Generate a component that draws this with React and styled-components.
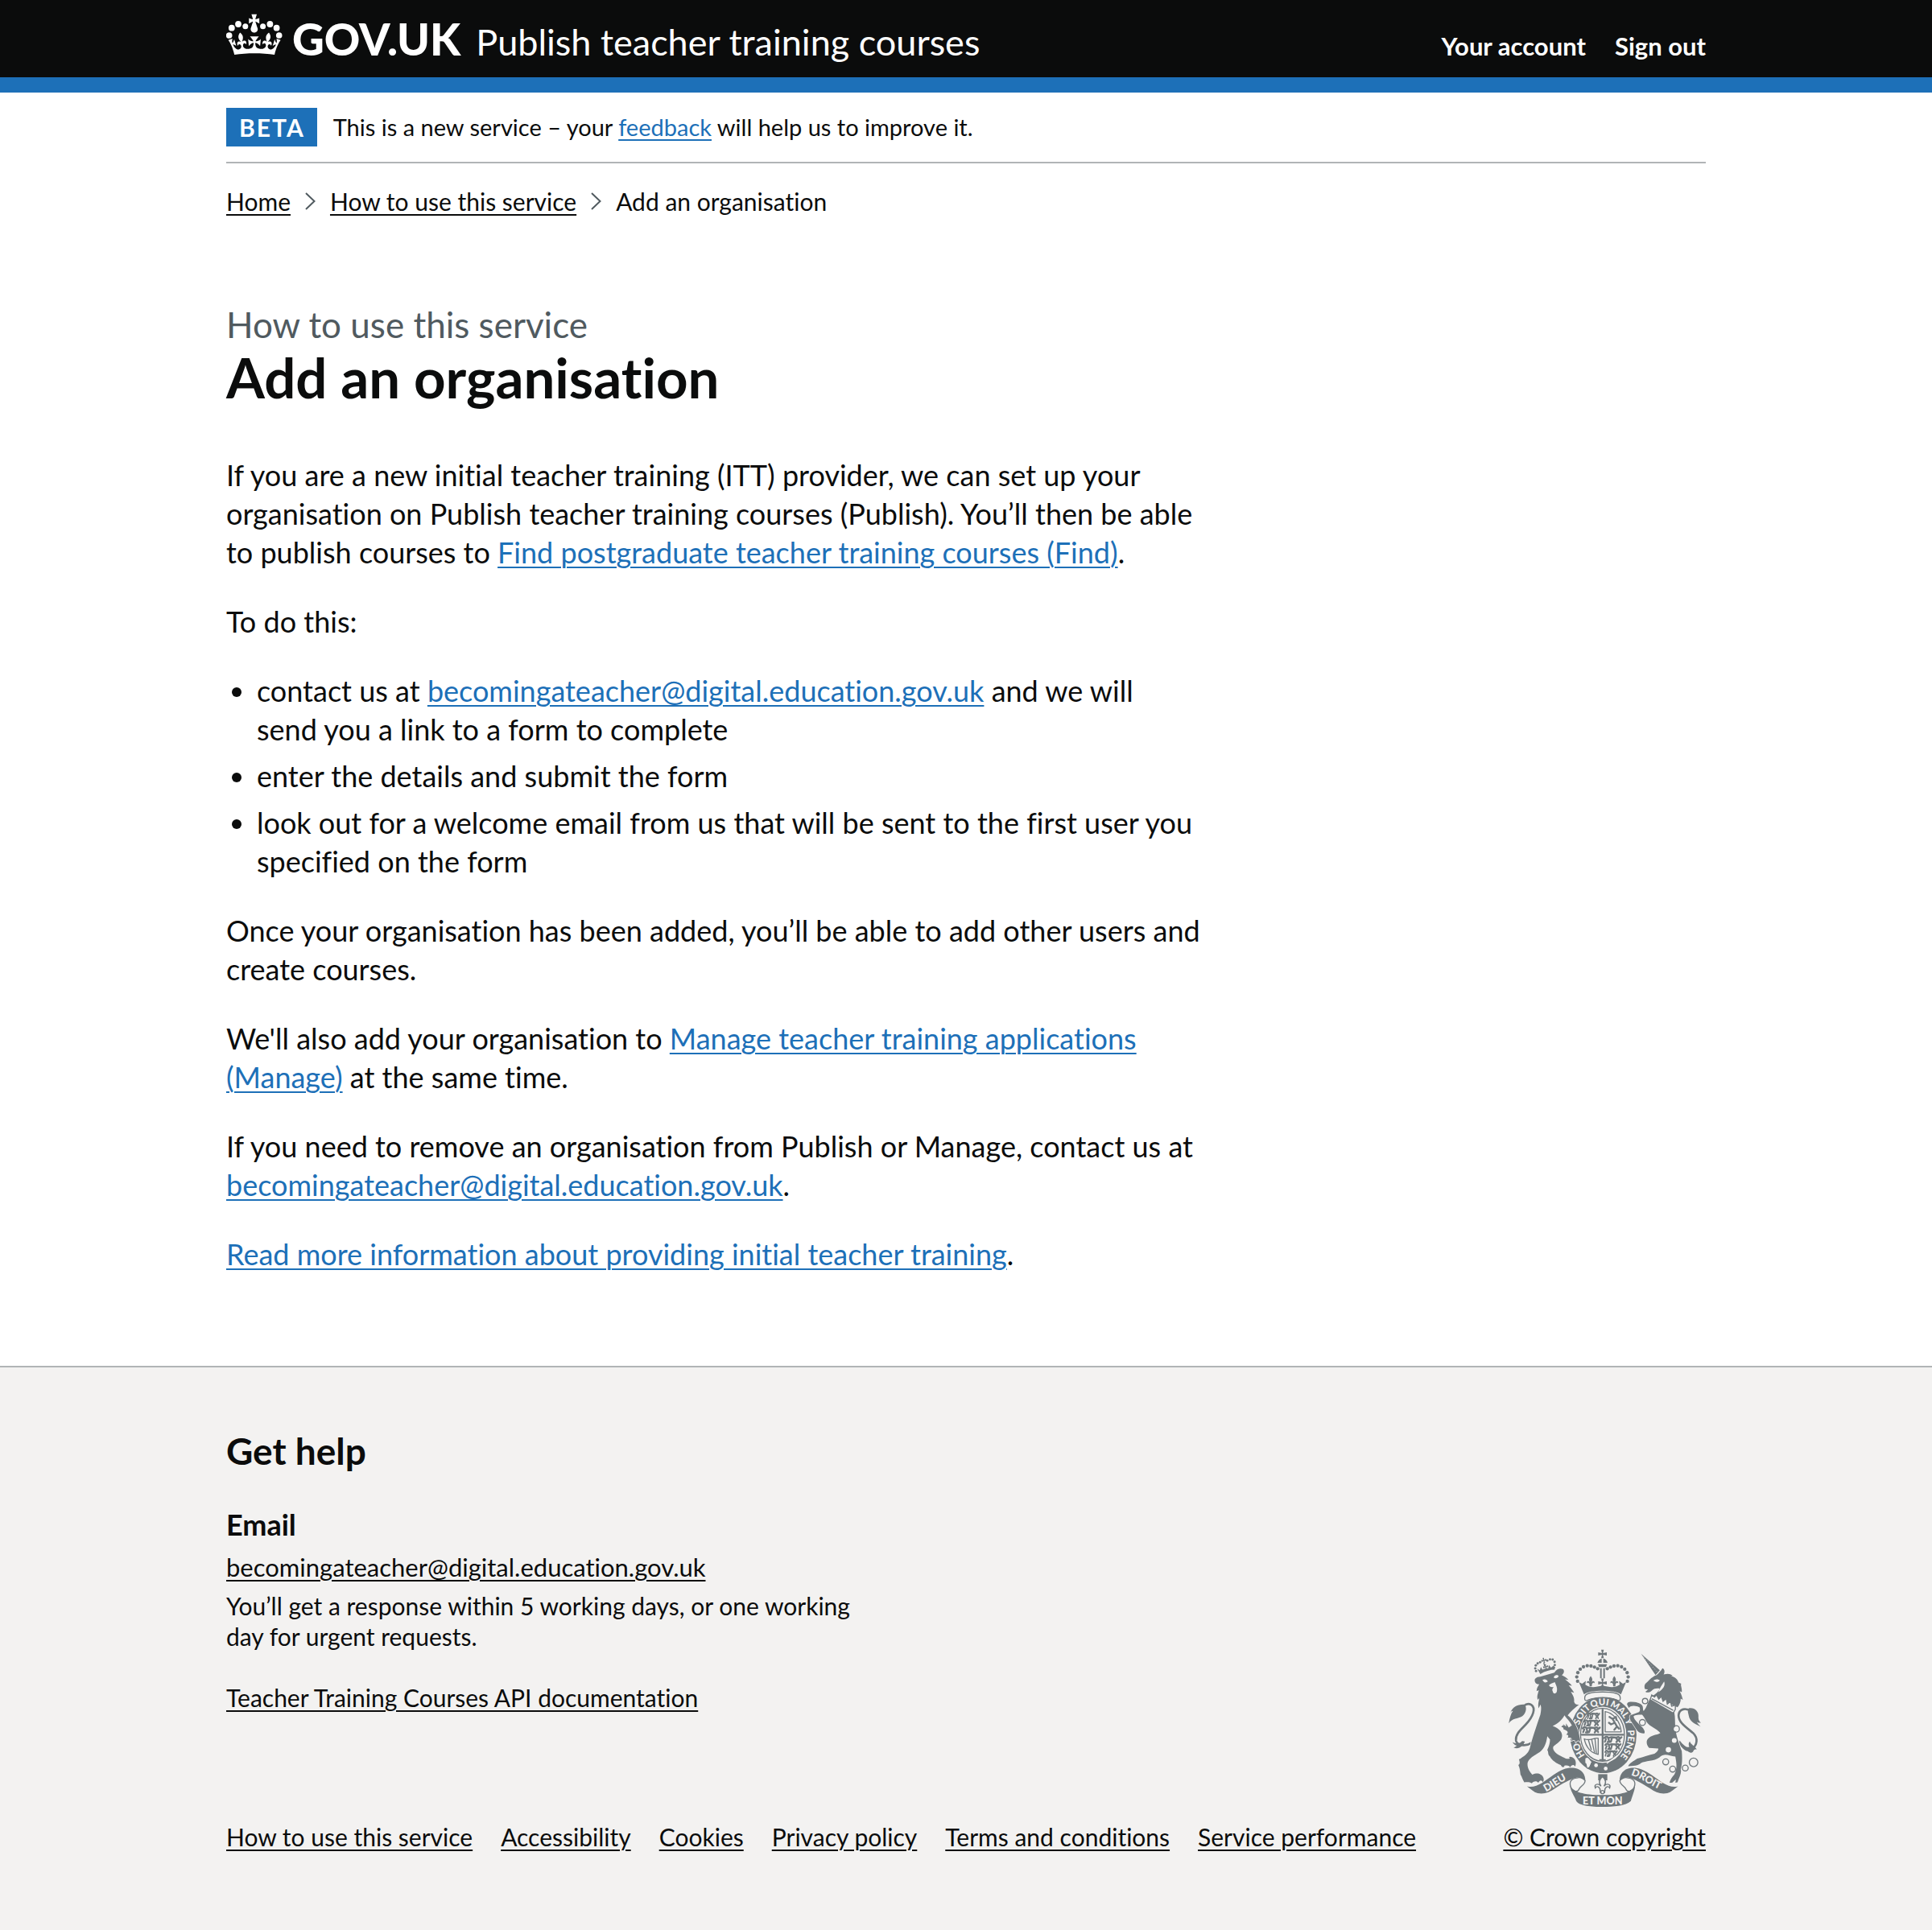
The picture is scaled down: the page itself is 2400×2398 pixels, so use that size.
import React from "react";
import styled, { createGlobalStyle } from "styled-components";

const ink = "#0b0c0c";
const blue = "#1d70b8";
const grey = "#f3f2f1";
const rule = "#b1b4b6";
const secondary = "#505a5f";
const crestGrey = "#6f777b";

const GlobalStyle = createGlobalStyle`
  * { box-sizing: border-box; }
  body {
    margin: 0;
    background: #ffffff;
    color: ${ink};
    font-family: Lato, "Liberation Sans", sans-serif;
    font-variant-ligatures: none;
  }
  h1, h2, h3, p, ul, ol { margin: 0; padding: 0; font-weight: 400; }
`;

const Page = styled.div`
  display: flex;
  flex-direction: column;
  min-height: 100vh;
`;

const Container = styled.div`
  width: calc(100% - 60px);
  max-width: 1838px;
  margin: 0 auto;
`;

const Link = styled.a`
  color: ${(p) => (p.$plain ? ink : blue)};
  text-decoration: underline;
  text-decoration-thickness: 2px;
  text-underline-offset: 4px;
`;

/* Header */

const Header = styled.header`
  background: ${ink};
  color: #ffffff;
  border-bottom: 19px solid ${blue};
`;

const HeaderRow = styled(Container)`
  display: flex;
  align-items: baseline;
  height: 96px;
  padding-top: 17px;
`;

const LogoLink = styled.a`
  display: flex;
  align-items: baseline;
  gap: 12px;
  color: #ffffff;
  text-decoration: none;
  font-size: 55px;
  font-weight: 900;
  line-height: 56px;
`;

const CrownSvg = styled.svg`
  width: 70px;
  height: 52px;
  margin-bottom: -5px;
  fill: #ffffff;
`;

const ServiceLink = styled.a`
  margin-left: 19px;
  color: #ffffff;
  text-decoration: none;
  font-size: 45px;
  line-height: 48px;
`;

const HeaderNav = styled.nav`
  display: flex;
  gap: 36px;
  margin-left: auto;
`;

const NavLink = styled.a`
  color: #ffffff;
  text-decoration: none;
  font-size: 31px;
  font-weight: 700;
  line-height: 38px;
`;

/* Phase banner and breadcrumbs */

const PhaseBanner = styled.div`
  display: flex;
  align-items: center;
  gap: 20px;
  padding: 19px 0;
  border-bottom: 2px solid ${rule};
  font-size: 29px;
  line-height: 38px;
`;

const Tag = styled.strong`
  padding: 0 15px 0 16px;
  background: ${blue};
  color: #ffffff;
  font-size: 30px;
  font-weight: 700;
  line-height: 48px;
  letter-spacing: 2px;
`;

const Breadcrumbs = styled.ol`
  display: flex;
  align-items: center;
  gap: 18px;
  padding-top: 28px;
  list-style: none;
  font-size: 30px;
  line-height: 38px;
`;

const Crumb = styled.li`
  display: flex;
  align-items: center;
  gap: 18px;
`;

const ChevronSvg = styled.svg`
  width: 13px;
  height: 22px;
  fill: none;
  stroke: ${secondary};
  stroke-width: 2;
`;

/* Content */

const Main = styled.main`
  display: flex;
  flex-direction: column;
  gap: 38px;
  padding: 106px 0 115px;
  font-size: 36px;
  line-height: 48px;
`;

const Heading = styled.h1`
  margin-bottom: 21px;
  font-size: 69px;
  font-weight: 700;
  line-height: 76px;
`;

const Caption = styled.span`
  display: block;
  color: ${secondary};
  font-size: 44px;
  font-weight: 400;
  line-height: 56px;
`;

const Paragraph = styled.p`
  max-width: 67%;
`;

const BulletList = styled.ul`
  display: flex;
  flex-direction: column;
  gap: 10px;
  max-width: 1204px;
  padding-left: 38px;
  list-style: disc;
`;

/* Footer */

const Footer = styled.footer`
  flex: 1;
  padding: 76px 0 95px;
  background: ${grey};
  border-top: 2px solid ${rule};
`;

const FooterRow = styled(Container)`
  display: flex;
  justify-content: space-between;
  align-items: flex-end;
  font-size: 30px;
  line-height: 38px;
`;

const FooterMeta = styled.div`
  flex: 1;
`;

const FooterHeading = styled.h2`
  font-size: 46px;
  font-weight: 700;
  line-height: 56px;
`;

const FooterSubheading = styled.h3`
  margin-top: 39px;
  font-size: 36px;
  font-weight: 700;
  line-height: 48px;
`;

const FooterText = styled.p`
  max-width: 800px;
  margin-top: ${(p) => (p.$spaced ? 38 : 10)}px;
  font-size: ${(p) => (p.$large ? 31 : 30)}px;
`;

const FooterLinks = styled.ul`
  display: flex;
  gap: 35px;
  margin-top: 135px;
  list-style: none;
`;

const Copyright = styled.div`
  display: flex;
  flex-direction: column;
  align-items: center;
  gap: 18px;
`;

const CrestSvg = styled.svg`
  width: 239px;
  height: 196px;
  font-family: Lato, "Liberation Sans", sans-serif;
`;

function Crown() {
  const dots = [
    [3.7, 27, 3.8],
    [6.8, 17.7, 3.9],
    [15, 13, 3.9],
    [23.8, 15.7, 3.5],
  ];
  return (
    <CrownSvg viewBox="0 0 70 52" aria-hidden="true">
      {dots.map(([x, y, r]) => (
        <React.Fragment key={x}>
          <circle cx={x} cy={y} r={r} />
          <circle cx={69.4 - x} cy={y} r={r} />
        </React.Fragment>
      ))}
      <path
        transform="translate(3.5 .7) scale(1.95)"
        d="M17 4.7l2.3 1.2V2.5l-2.3.7-.2-.2.9-3h-3.4l.9 3-.2.2c-.1.1-2.3-.7-2.3-.7v3.4L15 4.7c.1.1.1.2.2.2l-1.3 4c-.1.2-.1.4-.1.6 0 1.1.8 2 1.9 2.2h.7c1-.2 1.9-1.1 1.9-2.1 0-.2 0-.4-.1-.6l-1.3-4c-.1-.2 0-.2.1-.3"
      />
      <path
        transform="translate(1.74 -10.8) scale(2.06)"
        d="M16 29.2c4.4 0 8.6.3 12.3.8 1.1-4.5 2.4-7 3.7-8.8l-2.5-.9c.2 1.3.3 1.9 0 2.7-.4-.4-.8-1.1-1.1-2.3l-1.2 4c.7-.5 1.3-.8 2-.9-1.1 2.5-2.6 3.1-3.5 3-1.1-.2-1.7-1.2-1.5-2.1.3-1.2 1.5-1.5 2.1-.1 1.1-2.3-.8-3-2-2.3 1.9-1.9 2.1-3.5.6-5.6-2.1 1.6-2.1 3.2-1.2 5.5-1.2-1.4-3.2-.6-2.5 1.6.9-1.4 2.1-.5 1.9.8-.2 1.1-1.7 2.1-3.5 1.9-2.7-.2-2.9-2.1-2.9-3.6.7-.1 1.9.5 2.9 1.9l.4-4.3c-1.1 1.1-2.1 1.4-3.2 1.4.4-1.2 2.1-3 2.1-3h-5.4s1.7 1.9 2.1 3c-1.1 0-2.1-.2-3.2-1.4l.4 4.3c1-1.4 2.2-2 2.9-1.9-.1 1.5-.2 3.4-2.9 3.6-1.9.2-3.4-.8-3.5-1.9-.2-1.3 1-2.2 1.9-.8.7-2.3-1.2-3-2.5-1.6.9-2.2.9-3.9-1.2-5.5-1.5 2-1.3 3.7.6 5.6-1.2-.7-3.1 0-2 2.3.6-1.4 1.8-1.1 2.1.1.2.9-.3 1.9-1.5 2.1-.9.2-2.4-.5-3.5-3 .6 0 1.2.3 2 .9l-1.2-4c-.3 1.1-.7 1.9-1.1 2.3-.3-.8-.2-1.4 0-2.7l-2.5.9c1.3 1.8 2.6 4.3 3.7 8.8 3.7-.5 7.9-.8 12.3-.8"
      />
    </CrownSvg>
  );
}

function Chevron() {
  return (
    <ChevronSvg viewBox="0 0 13 22" aria-hidden="true">
      <path d="M1 1l10.5 10L1 21" />
    </ChevronSvg>
  );
}

const crossPattee = "M-5 -16H5L2 -3 16 -6V6L2 3 5 16H-5L-2 3 -16 6V-6L-2 -3Z";
const fleur =
  "M0 -20C8 -10 7 -4 3 3C8 -5 17 -2 14 7C12 3 8 3 5 9L4 18H-4L-5 9C-8 3 -12 3 -14 7C-17 -2 -8 -5 -3 3C-7 -4 -8 -10 0 -20Z";
const passant =
  "M-32 -6C-28 -12 -20 -12 -17 -6L-6 -9 14 -8C22 -12 26 -8 24 -2L32 -9M-26 -2L-30 8M-17 -4L-14 8-20 9M-4 -5L-8 8-14 9M12 -5L18 2 13 9M20 0L26 8";

/* Ribbon end, drawn on the left and mirrored for the right */
function RibbonEnd() {
  return (
    <>
      <path d="M110 567C146 575 172 550 208 525C243 502 262 496 288 499C314 503 329 523 328 548C318 537 306 532 294 535C272 540 240 558 215 575C194 590 174 598 150 593C136 589 124 577 110 567Z" />
      <path
        d="M296 536C276 538 267 550 273 568C279 588 299 592 305 577C310 566 327 562 327 546C318 536 306 533 296 536Z"
        fill={grey}
        stroke={crestGrey}
        strokeWidth="4"
      />
    </>
  );
}

function Crest() {
  const archDots = [
    [299, 175], [296, 159], [300, 143], [309, 130],
    [321, 121], [335, 117], [349, 118], [362, 122], [374, 128],
  ];
  const chain = [
    [551, 249, 10], [541, 329, 11], [667, 353, 12],
    [628, 476, 11], [654, 503, 11], [701, 499, 11], [732, 478, 16],
  ];
  const motto = [["HO", 78], ["SOIT", 196], ["QUI", 277], ["MAL", 346], ["Y", 424], ["PENSE", 464]];
  return (
    <CrestSvg viewBox="42 55 717 589" fill={crestGrey} aria-hidden="true">
      <defs>
        <path id="crest-motto" d="M394 486A93 111 0 0 1 394 264A93 111 0 0 1 394 486" />
        <path id="crest-dieu" d="M181 588C212 573 242 546 282 532" />
        <path id="crest-droit" d="M498 527C532 530 575 573 640 592" />
      </defs>

      {/* Central crown */}
      <path transform="translate(392 73)" d={crossPattee} />
      <path d="M373 106C376 96 383 91 389 90V106ZM395 90C403 91 409 97 411 106H395ZM375 111H409L405 122H379Z" />
      {archDots.map(([x, y]) => (
        <React.Fragment key={x + "-" + y}>
          <circle cx={x} cy={y} r="6.5" />
          <circle cx={784 - x} cy={y} r="6.5" />
        </React.Fragment>
      ))}
      <path d="M383 126H389V164H383ZM395 126H401V164H395Z" />
      <path transform="translate(392 181)" d={crossPattee} />
      <path transform="translate(348 176)" d={fleur} />
      <path transform="translate(436 176)" d={fleur} />
      <path d="M304 178L316 184 330 174 328 188C345 200 365 198 392 191C419 198 439 200 456 188L454 174 468 184 480 178L461 224C440 206 344 206 323 224Z" />
      <path
        d="M326 235C326 221 350 215 392 215C434 215 458 221 458 235C460 245 456 249 449 246C420 232 364 232 335 246C328 249 324 245 326 235Z"
        fill={grey}
        stroke={crestGrey}
        strokeWidth="4"
      />

      {/* Garter and motto */}
      <ellipse cx="395" cy="375" rx="124" ry="143" />
      <ellipse cx="393" cy="375" rx="88" ry="105" fill={grey} />
      <g fill={grey} fontSize="34" fontWeight="900">
        {motto.map(([word, offset]) => (
          <text key={word}>
            <textPath href="#crest-motto" startOffset={offset}>{word}</textPath>
          </text>
        ))}
      </g>
      <path
        d="M333 242C364 229 420 229 451 242"
        fill="none"
        stroke={grey}
        strokeWidth="3"
      />

      {/* Shield */}
      <ellipse cx="392" cy="375" rx="82" ry="99" fill="none" stroke={crestGrey} strokeWidth="4" />
      <path d="M389 278H396V472H389ZM312 371H472V378H312Z" />
      <g fill="none" stroke={crestGrey} strokeWidth="7" strokeLinejoin="round" strokeLinecap="round">
        <path transform="translate(358 305) scale(.7 1)" d={passant} />
        <path transform="translate(352 331) scale(.9 1)" d={passant} />
        <path transform="translate(350 357)" d={passant} />
        <path transform="translate(431 393)" d={passant} />
        <path transform="translate(431 419) scale(.9 1)" d={passant} />
        <path transform="translate(424 445) scale(.7 1)" d={passant} />
        <path d="M418 308L430 316 438 330 424 336 416 330M438 330L446 344 436 356M446 344L454 352M430 316L442 308 444 320" />
        <g strokeWidth="4">
          <path d="M402 288C430 292 458 322 462 364H402Z" />
          <path d="M324 390C342 400 362 384 376 388V448C352 444 330 424 324 390ZM340 396L350 430M352 394L362 440M364 390L369 444" />
        </g>
      </g>
      <path d="M380 466H404V472H380Z" />

      {/* Buckle and strap */}
      <path
        d="M326 462C344 452 342 470 354 476C346 486 350 496 338 500C328 500 336 484 326 480Z"
        fill={grey}
        stroke={crestGrey}
        strokeWidth="4"
      />
      <path d="M352 474C385 486 420 484 450 462L476 480C440 516 380 522 342 500Z" />
      <path d="M408 482L448 452" stroke={grey} strokeWidth="4" />
      <circle cx="368" cy="489" r="7" fill={grey} />
      <circle cx="404" cy="501" r="7" fill={grey} />
      <path d="M376 522H410V545H376Z" />
      <path
        transform="translate(392 562) scale(1.9 1.6)"
        d={fleur}
        fill={grey}
        stroke={crestGrey}
        strokeWidth="2.4"
      />
      <circle cx="392" cy="589" r="6" fill={grey} stroke={crestGrey} strokeWidth="4" />

      {/* Lion */}
      <path
        d="M128 405C105 420 72 414 69 396C66 372 88 355 106 336C134 306 144 275 126 263C116 257 106 260 98 268"
        fill="none"
        stroke={crestGrey}
        strokeWidth="8"
      />
      <path d="M42 332C46 312 50 296 58 286C52 286 50 290 48 294C54 272 76 260 102 262C112 278 104 296 92 306C76 316 56 312 42 332ZM92 398C84 408 70 410 56 402C60 410 66 414 72 415C68 420 64 422 60 422C78 432 98 416 102 400Z" />
      <path
        stroke={grey}
        strokeWidth="4"
        paintOrder="stroke"
        d="M160 158L212 143C222 128 234 126 245 130C252 138 246 148 240 152C252 158 258 162 265 170L252 168C264 178 272 184 278 192L266 190C276 202 282 210 286 218L274 214C284 230 288 240 286 252C290 262 296 264 304 262C286 276 272 288 262 302C284 320 298 345 304 370C306 384 310 392 308 402C302 392 298 396 292 404C290 392 286 394 276 398C280 388 276 384 262 386C268 376 262 374 256 374C268 366 262 360 246 354C248 350 244 346 238 346C244 342 238 338 248 340L244 334L256 344L256 332L266 348L278 340C270 324 258 314 250 302C244 316 222 336 206 342C232 350 246 370 240 386C236 402 214 410 208 420C204 436 226 450 240 456C256 464 258 466 270 464C262 456 276 454 286 464C296 474 292 490 290 494C284 484 276 488 272 496C266 490 262 488 250 490C248 500 240 496 236 488C222 482 202 470 196 456C186 448 192 440 186 432C190 420 196 410 196 392L186 380C182 410 172 432 150 444C128 458 112 468 112 484C112 502 122 514 130 524C144 518 152 518 162 524C172 530 176 542 170 552C164 542 158 544 152 554C146 546 136 548 128 556C120 550 108 552 100 552C92 540 92 532 86 524C84 510 84 500 78 488C84 484 84 478 80 466C86 466 88 462 94 458C104 452 118 440 122 420C128 396 146 340 160 300C164 280 164 268 160 262L154 276C150 262 154 252 156 238L150 244C146 228 152 220 154 208L146 212C146 200 152 194 156 186C144 188 136 176 140 166C146 160 152 158 160 158Z"
      />
      <path d="M168 170C176 166 184 168 188 176C180 182 172 180 168 170ZM212 156C220 150 226 152 228 156C226 164 216 166 210 162ZM192 190C198 182 208 182 214 178C220 192 224 200 222 210C222 222 208 226 206 212C202 204 208 200 210 196C202 198 196 196 192 190Z" fill={grey} />
      {[
        [144, 137], [141, 127], [143, 116], [150, 108], [159, 104],
        [186, 98], [196, 93], [206, 94], [213, 102], [214, 114], [211, 124],
      ].map(([x, y]) => (
        <circle key={x} cx={x} cy={y} r="4.5" />
      ))}
      <path transform="translate(173 97) rotate(-14) scale(.6)" d={crossPattee} />
      <path transform="translate(180 121) rotate(-14) scale(.6)" d={crossPattee} />
      <path d="M171 106L175 105 178 118 174 119ZM148 128L158 134 162 122 168 132 178 128 190 126 192 114 200 124 210 116L214 132C196 132 178 138 160 148Z" />

      {/* Unicorn */}
      <path
        d="M726 430C746 412 750 388 730 368C706 348 676 330 676 302C678 278 702 272 724 288"
        fill="none"
        stroke={crestGrey}
        strokeWidth="8"
      />
      <path d="M714 276C738 272 752 290 750 308C750 322 754 324 760 330C752 330 748 330 744 326C746 332 754 340 758 344C738 336 716 324 714 304C712 292 708 288 714 276ZM680 396C694 414 706 424 716 420C712 410 714 404 718 400C722 412 738 418 744 430C736 428 734 430 730 438C724 444 716 442 710 436C698 434 686 420 676 408Z" />
      <path
        stroke={grey}
        strokeWidth="4"
        paintOrder="stroke"
        d="M574 236L660 292C664 310 662 330 664 350C668 384 676 400 688 436C690 460 690 484 684 504C688 516 680 530 672 552L664 554L666 542L652 554H642C646 540 654 530 660 524C672 500 668 480 664 456C640 454 624 440 604 460C584 474 552 472 536 480C524 490 512 492 488 492C492 482 506 474 522 464C546 458 566 450 586 446C596 438 602 432 600 426L566 424C550 404 556 386 580 378C592 372 602 374 608 368C594 350 570 346 556 326C552 320 548 308 540 300C528 300 514 300 508 306C510 320 526 332 538 344C548 354 552 364 548 370C538 370 524 366 518 354L504 332C496 322 490 310 496 302L528 290C534 284 532 276 530 272C514 266 500 264 490 274L484 262C482 254 492 250 500 252C520 252 536 256 542 268C544 276 542 284 546 286C560 270 560 250 574 236Z"
      />
      <path d="M536 72L606 134 590 152Z" />
      <path d="M546 84L598 142" stroke={grey} strokeWidth="2" strokeDasharray="3 7" fill="none" />
      <path
        stroke={grey}
        strokeWidth="3"
        paintOrder="stroke"
        d="M594 152C602 144 610 136 616 126C624 130 626 140 620 150C634 146 644 146 654 154L648 156C664 160 672 168 676 180L686 184C682 190 690 200 688 216L680 212C688 226 690 238 692 244L684 240C684 252 680 264 672 272L578 230C592 222 602 212 606 202C594 200 584 202 578 208C570 216 560 220 552 214L562 206L550 204C548 196 548 190 552 184C564 176 572 160 594 152Z"
      />
      <path d="M582 172C590 166 600 166 606 172C600 180 590 178 582 172ZM606 202C612 192 616 186 622 176C628 190 618 206 600 216Z" fill={grey} />
      <path
        d="M576 226L586 234 594 226 602 242 612 232 618 250 630 240 634 260 646 250 650 268 664 264 664 280 656 294 570 244Z"
        fill={grey}
        stroke={crestGrey}
        strokeWidth="4"
      />
      <path d="M576 240L656 284" stroke={crestGrey} strokeWidth="4" />
      <circle cx="660" cy="396" r="9" fill={grey} />
      <circle cx="638" cy="431" r="10" fill={grey} />
      {chain.map(([x, y, r]) => (
        <circle key={x} cx={x} cy={y} r={r} fill="none" stroke={crestGrey} strokeWidth="4" />
      ))}
      <circle cx="667" cy="353" r="9" fill={grey} />

      {/* Ribbon */}
      <RibbonEnd />
      <g transform="translate(784 0) scale(-1 1)">
        <RibbonEnd />
      </g>
      <path d="M271 566C284 588 320 600 392 600C464 600 500 588 513 566C514 580 502 606 498 622C480 640 430 644 392 644C354 644 304 640 294 622C288 604 274 590 271 566Z" />
      <g fill={grey} fontSize="38" fontWeight="900">
        <text>
          <textPath href="#crest-dieu">DIEU</textPath>
        </text>
        <text x="392" y="635" textAnchor="middle">ET MON</text>
        <text>
          <textPath href="#crest-droit">DROIT</textPath>
        </text>
      </g>
    </CrestSvg>
  );
}

const email = "becomingateacher@digital.education.gov.uk";

const footerLinks = [
  "How to use this service",
  "Accessibility",
  "Cookies",
  "Privacy policy",
  "Terms and conditions",
  "Service performance",
];

export default function App() {
  return (
    <Page>
      <GlobalStyle />
      <Header>
        <HeaderRow>
          <LogoLink href="#">
            <Crown />
            GOV.UK
          </LogoLink>
          <ServiceLink href="#">Publish teacher training courses</ServiceLink>
          <HeaderNav>
            <NavLink href="#">Your account</NavLink>
            <NavLink href="#">Sign out</NavLink>
          </HeaderNav>
        </HeaderRow>
      </Header>

      <Container>
        <PhaseBanner>
          <Tag>BETA</Tag>
          <span>
            This is a new service – your <Link href="#">feedback</Link> will help us to improve it.
          </span>
        </PhaseBanner>
        <nav>
          <Breadcrumbs>
            <Crumb>
              <Link $plain href="#">Home</Link>
            </Crumb>
            <Crumb>
              <Chevron />
              <Link $plain href="#">How to use this service</Link>
            </Crumb>
            <Crumb>
              <Chevron />
              Add an organisation
            </Crumb>
          </Breadcrumbs>
        </nav>

        <Main>
          <Heading>
            <Caption>How to use this service</Caption>
            Add an organisation
          </Heading>
          <Paragraph>
            If you are a new initial teacher training (ITT) provider, we can set up your
            organisation on Publish teacher training courses (Publish). You’ll then be able to
            publish courses to{" "}
            <Link href="#">Find postgraduate teacher training courses (Find)</Link>.
          </Paragraph>
          <Paragraph>To do this:</Paragraph>
          <BulletList>
            <li>
              contact us at <Link href="#">{email}</Link> and we will send you a link to a form to
              complete
            </li>
            <li>enter the details and submit the form</li>
            <li>
              look out for a welcome email from us that will be sent to the first user you
              specified on the form
            </li>
          </BulletList>
          <Paragraph>
            Once your organisation has been added, you’ll be able to add other users and create
            courses.
          </Paragraph>
          <Paragraph>
            We'll also add your organisation to{" "}
            <Link href="#">Manage teacher training applications (Manage)</Link> at the same time.
          </Paragraph>
          <Paragraph>
            If you need to remove an organisation from Publish or Manage, contact us at{" "}
            <Link href="#">{email}</Link>.
          </Paragraph>
          <Paragraph>
            <Link href="#">Read more information about providing initial teacher training</Link>.
          </Paragraph>
        </Main>
      </Container>

      <Footer>
        <FooterRow>
          <FooterMeta>
            <FooterHeading>Get help</FooterHeading>
            <FooterSubheading>Email</FooterSubheading>
            <FooterText $large>
              <Link $plain href="#">{email}</Link>
            </FooterText>
            <FooterText>
              You’ll get a response within 5 working days, or one working day for urgent requests.
            </FooterText>
            <FooterText $spaced>
              <Link $plain href="#">Teacher Training Courses API documentation</Link>
            </FooterText>
            <FooterLinks>
              {footerLinks.map((label) => (
                <li key={label}>
                  <Link $plain href="#">{label}</Link>
                </li>
              ))}
            </FooterLinks>
          </FooterMeta>
          <Copyright>
            <Crest />
            <Link $plain href="#">© Crown copyright</Link>
          </Copyright>
        </FooterRow>
      </Footer>
    </Page>
  );
}
